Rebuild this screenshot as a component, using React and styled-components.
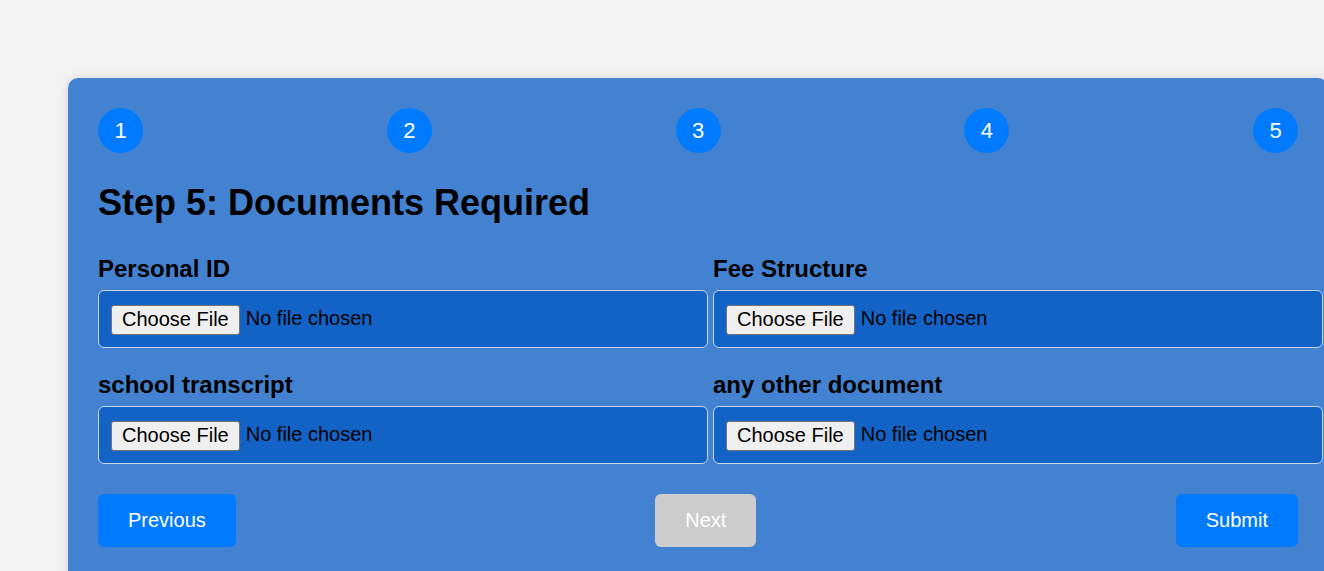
import React from 'react';
import styled, { createGlobalStyle } from 'styled-components';

const GlobalStyle = createGlobalStyle`
  body {
    margin: 0;
    background-color: #f3f3f3;
    font-family: 'Liberation Sans', Arial, sans-serif;
    overflow: hidden;
  }
`;

const steps = [1, 2, 3, 4, 5];

const documents = [
  { id: 'personalId', label: 'Personal ID' },
  { id: 'feeStructure', label: 'Fee Structure' },
  { id: 'transcript', label: 'school transcript' },
  { id: 'otherDocument', label: 'any other document' },
];

const App = () => {
  return (
    <>
      <GlobalStyle />
      <Page>
        <Card>
          <StepBar>
            {steps.map((n) => (
              <StepCircle key={n}>{n}</StepCircle>
            ))}
          </StepBar>

          <Title>Step 5: Documents Required</Title>

          <FieldGrid>
            {documents.map((doc) => (
              <FormGroup key={doc.id}>
                <Label htmlFor={doc.id}>{doc.label}</Label>
                <FileInput id={doc.id} type='file' />
              </FormGroup>
            ))}
          </FieldGrid>

          <Actions>
            <NavButton>Previous</NavButton>
            <NavButton disabled>Next</NavButton>
            <NavButton>Submit</NavButton>
          </Actions>
        </Card>
      </Page>
    </>
  );
};

export default App;

const Page = styled.div`
  padding: 78px 0 0 68px;
  min-height: 571px;
  box-sizing: border-box;
`;

const Card = styled.div`
  width: 1200px;
  padding: 30px 30px 40px;
  background-color: #4382d0;
  border-radius: 10px;
  box-shadow: 0 0 12px rgba(0, 0, 0, 0.12);
`;

const StepBar = styled.div`
  display: flex;
  justify-content: space-between;
  align-items: center;
`;

const StepCircle = styled.div`
  width: 45px;
  height: 45px;
  border-radius: 50%;
  background-color: #007bff;
  color: #fff;
  font-size: 22px;
  display: flex;
  align-items: center;
  justify-content: center;
`;

const Title = styled.h2`
  margin: 29px 0 31px;
  font-size: 36px;
  font-weight: bold;
  color: #000;
`;

const FieldGrid = styled.div`
  display: grid;
  grid-template-columns: 610px 610px;
  column-gap: 5px;
`;

const FormGroup = styled.div`
  margin-bottom: 23px;
`;

const Label = styled.label`
  display: block;
  margin-bottom: 7px;
  font-size: 24px;
  font-weight: bold;
  color: #000;
`;

const FileInput = styled.input`
  display: block;
  width: 100%;
  height: 58px;
  box-sizing: border-box;
  padding: 0 12px 2px;
  background-color: #1363c6;
  border: 1px solid #c9d6e8;
  border-radius: 6px;
  font-family: 'Liberation Sans', Arial, sans-serif;
  font-size: 20px;
  line-height: 54px;
  color: #000;

  &::file-selector-button {
    height: 30px;
    margin: 0 6px 0 0;
    padding: 0 10px;
    font-family: 'Liberation Sans', Arial, sans-serif;
    font-size: 20px;
    color: #000;
    background-color: #efefef;
    border: 1px solid #767676;
    border-radius: 3px;
    vertical-align: middle;
  }
`;

const Actions = styled.div`
  display: flex;
  justify-content: space-between;
  margin-top: 7px;
`;

const NavButton = styled.button`
  padding: 15px 30px;
  font-family: 'Liberation Sans', Arial, sans-serif;
  font-size: 20px;
  color: #fff;
  background-color: ${(p) => (p.disabled ? '#cccccc' : '#007bff')};
  border: none;
  border-radius: 6px;
  cursor: ${(p) => (p.disabled ? 'not-allowed' : 'pointer')};
`;
